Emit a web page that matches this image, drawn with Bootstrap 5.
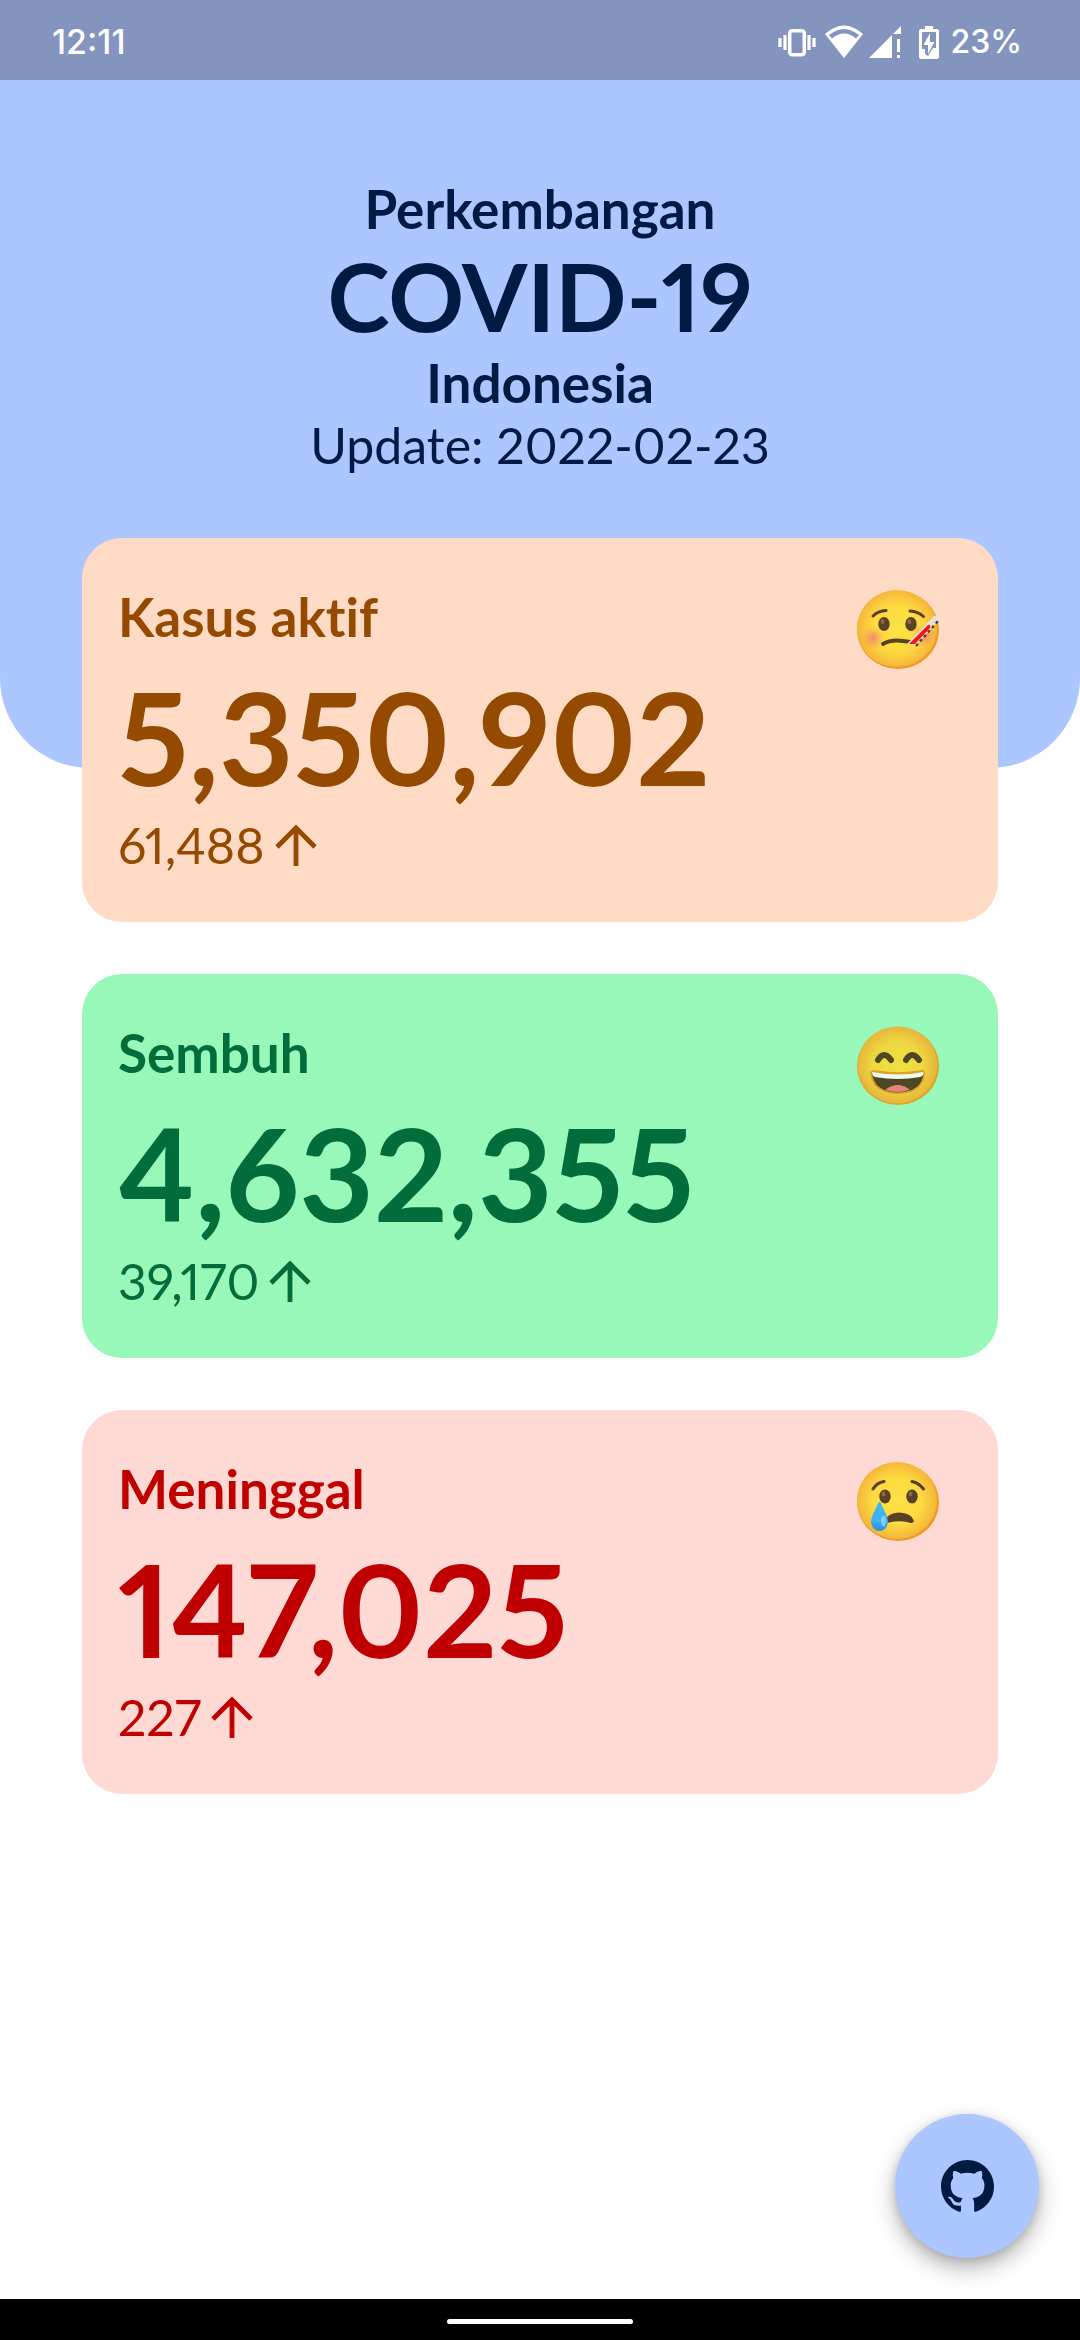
<!DOCTYPE html>
<html lang="id">
<head>
<meta charset="utf-8">
<meta name="viewport" content="width=device-width, initial-scale=1">
<title>Perkembangan COVID-19 Indonesia</title>
<link href="https://cdn.jsdelivr.net/npm/bootstrap@5.3.0/dist/css/bootstrap.min.css" rel="stylesheet">
<style>
  body { font-family: Lato, "Open Sans", sans-serif; font-variant-numeric: proportional-nums; font-variant-ligatures: none; background: #fff; }
  svg { display: block; flex: none; }
  .status-bar { height: 80px; padding: 3px 58px 0 52px; background: #8395bf; color: #fff; font: 500 34px/40px Inter, sans-serif; }
  .status-level { margin-left: 10px; font-size: 32px; }
  .hero { padding: 98px 24px 292px; background: #acc6ff; color: #001a43; border-radius: 0 0 90px 90px; }
  .hero-line { font-size: 53px; line-height: 62px; }
  .hero-title { font-size: 94px; line-height: 112px; }
  .hero-date { font-size: 50px; line-height: 62px; }
  .case-list { margin-top: -230px; padding: 0 82px; gap: 52px; }
  .case-card { padding: 48px 58px 46px 36px; border: 0; border-radius: 40px; }
  .case-name { font-size: 53px; line-height: 62px; }
  .case-total { font-size: 129px; line-height: 156px; margin-top: 10px; }
  .case-delta { font-size: 50px; line-height: 62px; gap: 10px; }
  .case-face { margin-top: 3px; }
  .case-active { background: #ffdbc5; color: #944a00; }
  .case-cured { background: #98f8b9; color: #006d3b; }
  .case-dead { background: #ffd9d3; color: #c00000; }
  .fab-row { padding: 0 41px 41px; }
  .fab { width: 144px; height: 144px; background: #acc6ff; color: #001a43; box-shadow: 0 10px 22px rgba(0,0,0,.3), 0 2px 8px rgba(0,0,0,.12); }
  .gesture-bar { height: 41px; padding-top: 3px; background: #000; }
  .gesture-pill { width: 186px; height: 5px; background: #fff; }
</style>
<script src="https://cdn.jsdelivr.net/npm/bootstrap@5.3.0/dist/js/bootstrap.bundle.min.js"></script>
</head>
<body class="d-flex flex-column min-vh-100">
<svg width="0" height="0" class="position-absolute" aria-hidden="true">
  <defs>
    <radialGradient id="skin"><stop offset="0" stop-color="#fee242"/><stop offset=".6" stop-color="#fddb40"/><stop offset="1" stop-color="#f5b639"/></radialGradient>
    <radialGradient id="skinGreen"><stop offset="0" stop-color="#efe140"/><stop offset=".6" stop-color="#eed840"/><stop offset="1" stop-color="#e7b53c"/></radialGradient>
    <radialGradient id="blush"><stop offset="0" stop-color="#f08070" stop-opacity=".9"/><stop offset="1" stop-color="#f59a60" stop-opacity="0"/></radialGradient>
    <linearGradient id="tear" x2="0" y2="1"><stop offset="0" stop-color="#3fb8f0"/><stop offset=".65" stop-color="#40b0f2"/><stop offset="1" stop-color="#2b8be0"/></linearGradient>
  </defs>
</svg>

<div class="status-bar d-flex justify-content-between align-items-center">
  <time>12:11</time>
  <div class="d-flex align-items-center">
    <svg width="38" height="34" viewBox="0 0 38 34" fill="none" stroke="#fff" stroke-width="3.5" aria-hidden="true"><rect x="11.7" y="5.7" width="14.6" height="24" rx="2.5"/><path d="M7 10v15M31 10v15M2 13v9M36 13v9" stroke-width="3.2"/></svg>
    <svg class="ms-2" width="40" height="34" viewBox="0 0 40 34" aria-hidden="true"><path fill="#fff" fill-rule="evenodd" d="M1 9Q20-8 39 9L20 33ZM5 10L8 13.500Q20 3.500 32 13.500L35 10Q20-2 5 10Z"/></svg>
    <svg class="ms-1" width="34" height="34" viewBox="0 0 34 34" fill="#fff" aria-hidden="true"><path d="M1 33L24 10V33ZM25 9L33 1V9ZM29 14h3v13h-3zM29 30h3v3h-3z"/></svg>
    <svg class="ms-3" width="22" height="34" viewBox="0 0 22 34" aria-hidden="true"><path fill="#fff" fill-rule="evenodd" d="M7 1h8v3h4q2 0 2 2v26q0 2-2 2H3q-2 0-2-2V6q0-2 2-2h4ZM4 7v17h3v5l3 2 5-8h3V7Z"/><path fill="#fff" d="M12 8L5.500 20H10v9l6.500-12H12Z"/></svg>
    <span class="status-level">23%</span>
  </div>
</div>

<header class="hero text-center">
  <div class="hero-line fw-bold">Perkembangan</div>
  <h1 class="hero-title fw-bold m-0">COVID-19</h1>
  <div class="hero-line fw-bold">Indonesia</div>
  <div class="hero-date">Update: 2022-02-23</div>
</header>

<main class="case-list d-flex flex-column">
  <section class="card case-card case-active flex-row justify-content-between align-items-start">
    <div>
      <h2 class="case-name fw-bold m-0">Kasus aktif</h2>
      <div class="case-total fw-bold">5,350,902</div>
      <div class="case-delta d-flex align-items-center">61,488
        <svg width="42" height="42" viewBox="0 0 42 42" fill="none" stroke="currentColor" stroke-width="4.800" aria-label="naik"><path d="M21 42V4M2 23L21 4l19 19"/></svg>
      </div>
    </div>
    <svg class="case-face" width="84" height="80" viewBox="0 0 84 80" role="img" aria-label="Wajah sakit">
      <ellipse cx="42" cy="41" rx="41" ry="39" fill="#ef9b22"/><ellipse cx="41" cy="39.500" rx="40" ry="38.500" fill="url(#skin)"/>
      <circle cx="17" cy="49" r="12" fill="url(#blush)"/><circle cx="68" cy="47" r="12" fill="url(#blush)"/>
      <g fill="#5a4025"><ellipse cx="28" cy="35" rx="5.700" ry="7"/><ellipse cx="55" cy="35" rx="5.700" ry="7"/></g>
      <g fill="#8c6846"><ellipse cx="26.500" cy="32.500" rx="2" ry="2.500"/><ellipse cx="53.500" cy="32.500" rx="2" ry="2.500"/></g>
      <path d="M17 27Q22 22 30 21.500M54 22Q62 22.500 67.500 27.500" fill="none" stroke="#5a4025" stroke-width="3" stroke-linecap="round"/>
      <path d="M27 55Q36 49 54 53" fill="none" stroke="#5a4025" stroke-width="4" stroke-linecap="round"/>
      <path d="M51 55L78 27Q82 25 83 31L60 56Z" fill="#e5e0db"/><path d="M53 55L72 36Q75 35 74 39L59 55Z" fill="#f51414"/>
      <path d="M60 57L82 32" stroke="#554337" stroke-width="2.500" stroke-dasharray="3 3"/>
    </svg>
  </section>

  <section class="card case-card case-cured flex-row justify-content-between align-items-start">
    <div>
      <h2 class="case-name fw-bold m-0">Sembuh</h2>
      <div class="case-total fw-bold">4,632,355</div>
      <div class="case-delta d-flex align-items-center">39,170
        <svg width="42" height="42" viewBox="0 0 42 42" fill="none" stroke="currentColor" stroke-width="4.800" aria-label="naik"><path d="M21 42V4M2 23L21 4l19 19"/></svg>
      </div>
    </div>
    <svg class="case-face" width="84" height="80" viewBox="0 0 84 80" role="img" aria-label="Wajah gembira">
      <ellipse cx="42" cy="41" rx="41" ry="39" fill="#e0a024"/><ellipse cx="41.500" cy="40" rx="40" ry="38.500" fill="url(#skinGreen)"/>
      <path d="M22 35Q28 25 35 35M50 35Q56 25 63 35" fill="none" stroke="#4f4724" stroke-width="6" stroke-linecap="round"/>
      <path d="M14 47Q16 44 21 45.500Q42 49 62 45.500Q68 44 69 47Q69 68 42 69Q15 68 14 47Z" fill="#e0a024"/>
      <path d="M16 48Q42 54 67.500 48Q66 67 42 67.500Q18 67 16 48Z" fill="#4f4724"/>
      <path d="M16 47Q42 52 67.500 47Q68 51 64 52Q42 56 19 52Q16 51 16 47Z" fill="#edfbf4"/>
      <path d="M29 65Q42 55 54 65Q42 69 29 65Z" fill="#e38578"/>
    </svg>
  </section>

  <section class="card case-card case-dead flex-row justify-content-between align-items-start">
    <div>
      <h2 class="case-name fw-bold m-0">Meninggal</h2>
      <div class="case-total fw-bold">147,025</div>
      <div class="case-delta d-flex align-items-center">227
        <svg width="42" height="42" viewBox="0 0 42 42" fill="none" stroke="currentColor" stroke-width="4.800" aria-label="naik"><path d="M21 42V4M2 23L21 4l19 19"/></svg>
      </div>
    </div>
    <svg class="case-face" width="84" height="80" viewBox="0 0 84 80" role="img" aria-label="Wajah menangis">
      <ellipse cx="42" cy="41" rx="41" ry="39" fill="#ef9b22"/><ellipse cx="41" cy="39.500" rx="40" ry="38.500" fill="url(#skin)"/>
      <g fill="#5a4025"><ellipse cx="29" cy="35.500" rx="5.700" ry="7"/><ellipse cx="56" cy="35.500" rx="5.700" ry="7"/></g>
      <g fill="#8c6846"><ellipse cx="27.500" cy="33" rx="2" ry="2.500"/><ellipse cx="54.500" cy="33" rx="2" ry="2.500"/></g>
      <path d="M17 28Q21 21.500 28 20.500M56 20.500Q63 22 67.500 28" fill="none" stroke="#5a4025" stroke-width="3" stroke-linecap="round"/>
      <path d="M29 60Q31 52 43 51.500Q56 52 58 60Q57 63 53 61.500Q43 59 33 61.500Q29 63 29 60Z" fill="#5a4025"/>
      <path d="M23.500 41Q25 41 26 45Q32 56 32 61Q31 69.500 23.500 70Q16 69.500 15 61Q15 56 21 45Q22 41 23.500 41Z" fill="url(#tear)"/><ellipse cx="27.500" cy="60" rx="2.500" ry="5.500" fill="#7dd0fa"/>
    </svg>
  </section>
</main>

<div class="fab-row d-flex justify-content-end mt-auto">
  <a class="fab rounded-circle d-flex align-items-center justify-content-center" href="#" aria-label="GitHub">
    <svg width="53" height="53" viewBox="0 0 16 16" fill="currentColor" aria-hidden="true"><path d="M8 0C3.580 0 0 3.580 0 8c0 3.540 2.290 6.530 5.470 7.590.4.070.55-.17.55-.38 0-.19-.01-.82-.01-1.490-2.010.37-2.530-.49-2.690-.94-.09-.23-.48-.94-.82-1.130-.28-.15-.68-.52-.01-.53.63-.01 1.080.58 1.230.82.72 1.210 1.870.87 2.330.66.07-.52.28-.87.51-1.070-1.780-.2-3.640-.89-3.640-3.950 0-.87.31-1.590.82-2.150-.08-.2-.36-1.020.08-2.120 0 0 .67-.21 2.200.82.64-.18 1.320-.27 2-.27s1.360.09 2 .27c1.530-1.040 2.200-.82 2.200-.82.44 1.100.16 1.920.08 2.120.51.56.82 1.270.82 2.150 0 3.070-1.870 3.750-3.650 3.950.29.25.54.73.54 1.480 0 1.070-.01 1.930-.01 2.200 0 .21.15.46.55.38A8.010 8.010 0 0 0 16 8c0-4.420-3.580-8-8-8Z"/></svg>
  </a>
</div>
<footer class="gesture-bar d-flex align-items-center justify-content-center">
  <div class="gesture-pill rounded-pill"></div>
</footer>
</body>
</html>
